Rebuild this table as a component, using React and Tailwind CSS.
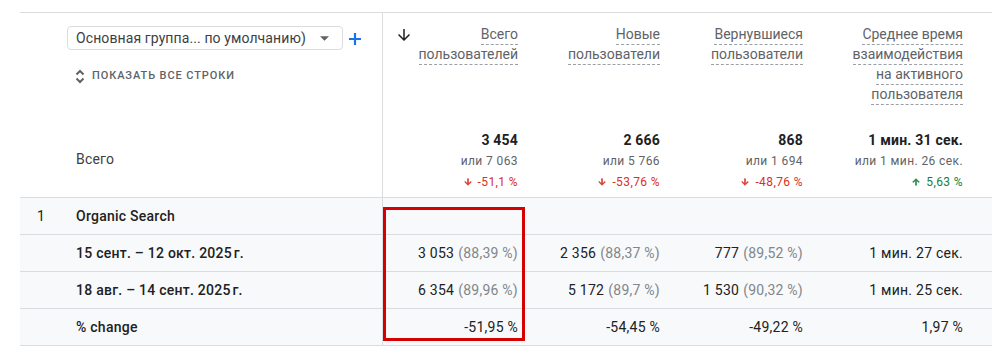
import React from 'react';

const cols = 'grid grid-cols-[363px_147px_142px_143px_160px_1fr]';

const headers = [
    { lines: ['Всего', 'пользователей'], total: '3 454', prev: 'или 7 063', delta: '-51,1 %', up: false, sorted: true },
    { lines: ['Новые', 'пользователи'], total: '2 666', prev: 'или 5 766', delta: '-53,76 %', up: false },
    { lines: ['Вернувшиеся', 'пользователи'], total: '868', prev: 'или 1 694', delta: '-48,76 %', up: false },
    { lines: ['Среднее время', 'взаимодействия', 'на активного', 'пользователя'], total: '1 мин. 31 сек.', prev: 'или 1 мин. 26 сек.', delta: '5,63 %', up: true },
];

const rows = [
    { label: '15 сент. – 12 окт. 2025\u202Fг.', values: [['3 053', '(88,39 %)'], ['2 356', '(88,37 %)'], ['777', '(89,52 %)'], ['1 мин. 27 сек.']] },
    { label: '18 авг. – 14 сент. 2025\u202Fг.', values: [['6 354', '(89,96 %)'], ['5 172', '(89,7 %)'], ['1 530', '(90,32 %)'], ['1 мин. 25 сек.']] },
    { label: '% change', values: [['-51,95 %'], ['-54,45 %'], ['-49,22 %'], ['1,97 %']] },
];

const SmallArrow = ({ up }) => (
    <svg width="10" height="10" viewBox="0 0 24 24" className={`inline-block mr-[5px] mb-[2px] ${up ? '' : 'rotate-180'}`}>
        <path d="M4 12l1.41 1.41L11 7.83V20h2V7.83l5.58 5.59L20 12l-8-8-8 8z" fill="currentColor" stroke="currentColor" strokeWidth="1.5" />
    </svg>
);

const App = () => {
    return (
        <div className="relative w-[992px] h-[350px] bg-white overflow-hidden pt-3 font-['Roboto',sans-serif] text-[#202124]">
            <div className="ml-5 border-t border-[#dadce0]">
                {/* header */}
                <div className={`${cols} h-[185px] border-b border-[#dadce0]`}>
                    <div className="border-r border-[#dadce0] pl-[47px] pt-[13px] flex flex-col">
                        <div className="flex items-center">
                            <div className="w-[276px] h-[24px] border border-[#dadce0] rounded-[4px] flex items-center pl-[8px] pr-[13px] text-[14px] tracking-[0.1px] text-[#3c4043]">
                                <span className="flex-1">Основная группа... по умолчанию)</span>
                                <svg width="9" height="5" viewBox="0 0 10 5"><path d="M0 0h10L5 5z" fill="#5f6368" /></svg>
                            </div>
                            <svg width="14" height="14" viewBox="0 0 14 14" className="ml-[5px] mt-[1px]">
                                <path d="M7 1v12M1 7h12" stroke="#1a73e8" strokeWidth="2.2" />
                            </svg>
                        </div>
                        <div className="flex items-center mt-[18px] pl-[8px]">
                            <svg width="10" height="15" viewBox="0 0 10 15">
                                <path d="M1.5 5.5L5 2 8.5 5.5M1.5 9.5L5 13 8.5 9.5" fill="none" stroke="#5f6368" strokeWidth="2" />
                            </svg>
                            <span className="ml-[7px] text-[11px] font-medium tracking-[0.9px] text-[#5f6368] uppercase">Показать все строки</span>
                        </div>
                        <div className="mt-[64px] pl-[9px] text-[14px] tracking-[0.2px] text-[#3c4043] leading-[20px]">Всего</div>
                    </div>
                    {headers.map((h, i) => (
                        <div key={i} className="relative flex flex-col justify-between items-end pr-[12px] pt-[12px] pb-[4px]">
                            {h.sorted && (
                                <svg width="18" height="18" viewBox="0 0 24 24" className="absolute left-[12px] top-[13px]">
                                    <path d="M20 12l-1.41-1.41L13 16.17V4h-2v12.17l-5.58-5.59L4 12l8 8 8-8z" fill="#202124" />
                                </svg>
                            )}
                            <div className="flex flex-col items-end">
                                {h.lines.map((l) => (
                                    <span key={l} className="inline-block text-[14px] leading-[19px] text-[#5f6368] border-b border-dashed border-[#9aa0a6]">{l}</span>
                                ))}
                            </div>
                            <div className="flex flex-col items-end">
                                <span className="text-[14px] leading-[21px] font-bold tracking-[0.2px] text-[#202124]">{h.total}</span>
                                <span className="text-[12px] leading-[21px] tracking-[0.4px] text-[#5f6368]">{h.prev}</span>
                                <span className={`text-[12px] leading-[21px] tracking-[0.4px] ${h.up ? 'text-[#188038]' : 'text-[#d93025]'}`}>
                                    <SmallArrow up={h.up} />
                                    {h.delta}
                                </span>
                            </div>
                        </div>
                    ))}
                    <div />
                </div>

                {/* body */}
                <div className="bg-[#f8f9fa] text-[14px] tracking-[0.25px]">
                    <div className={`${cols} h-[37px] border-b border-[#dadce0]`}>
                        <div className="border-r border-[#dadce0] flex items-center">
                            <span className="w-[56px] pl-[17px]">1</span>
                            <span className="font-medium">Organic Search</span>
                        </div>
                    </div>
                    {rows.map((r) => (
                        <div key={r.label} className={`${cols} h-[37px] border-b border-[#dadce0]`}>
                            <div className="border-r border-[#dadce0] flex items-center pl-[56px] font-medium">{r.label}</div>
                            {r.values.map((v, i) => (
                                <div key={i} className="flex items-center justify-end pr-[12px]">
                                    <span>{v[0]}</span>
                                    {v[1] && <span className="ml-[4px] text-[#80868b]">{v[1]}</span>}
                                </div>
                            ))}
                            <div />
                        </div>
                    ))}
                </div>
            </div>

            {/* highlight annotation */}
            <div className="absolute left-[383px] top-[207px] w-[142px] h-[134px] border-[3px] border-[#d50000]" />
        </div>
    );
};

export default App;
